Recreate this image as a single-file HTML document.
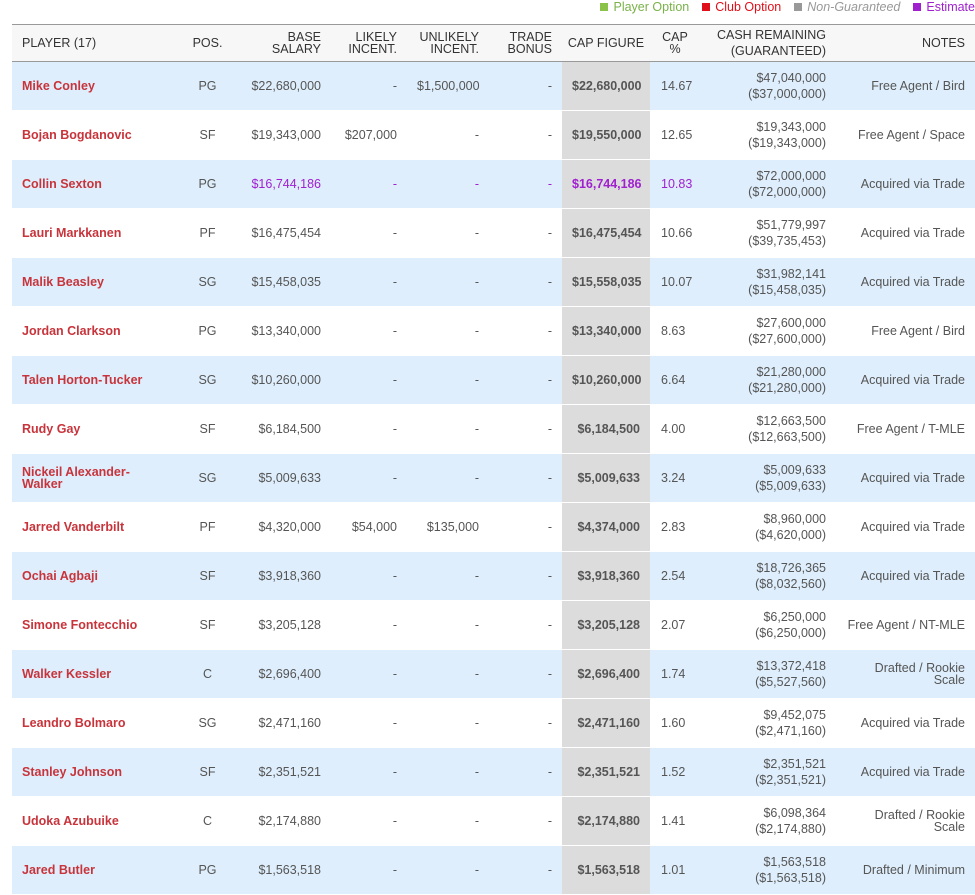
<!DOCTYPE html>
<html><head><style>
body{margin:0;background:#fff;font-family:"Liberation Sans",Arial,sans-serif;font-size:12.5px;color:#555;width:975px;height:895px;overflow:hidden;position:relative}
.legend{position:absolute;top:0;right:0;font-size:12.5px;line-height:14px;white-space:nowrap}
.legend span{margin-left:13px}
.legend i{display:inline-block;width:8px;height:8px;margin-right:5px;vertical-align:0}
table{position:absolute;left:12px;top:24px;border-collapse:collapse;table-layout:fixed;width:963px}
th{background:#f7f7f7;font-weight:normal;color:#333;height:36px;border-top:1px solid #999;border-bottom:1px solid #999;line-height:12px;text-align:right;padding:0 10px;font-size:12.5px}
td{height:48px;border-top:1px solid #fff;padding:0 10px;text-align:right;line-height:12px}
td.cash{line-height:16px}
tbody tr:nth-child(odd) td{background:#deeefc}
td.n{text-align:left;color:#c8343b;font-weight:bold}
td.p{text-align:center;padding:0}
td.c,tbody tr:nth-child(odd) td.c{background:#dcdcdc;font-weight:bold}
td.pc{text-align:left;padding-left:11px}
tr.e td{color:#a020d0}
tr.e td.n{color:#c8343b}
</style></head><body>
<div class="legend"><span style="color:#7ab24a"><i style="background:#8bc34a"></i>Player Option</span><span style="color:#e0101a"><i style="background:#e0101a"></i>Club Option</span><span style="color:#999;font-style:italic"><i style="background:#999"></i>Non-Guaranteed</span><span style="color:#a020d0"><i style="background:#a020d0"></i>Estimate</span></div>
<table>
<colgroup><col style="width:173px"><col style="width:45px"><col style="width:101px"><col style="width:76px"><col style="width:82px"><col style="width:73px"><col style="width:88px"><col style="width:50px"><col style="width:136px"><col style="width:139px"></colgroup>
<thead><tr><th style="text-align:left">PLAYER (17)</th><th style="text-align:center;padding:0">POS.</th><th>BASE<br>SALARY</th><th>LIKELY<br>INCENT.</th><th>UNLIKELY<br>INCENT.</th><th>TRADE<br>BONUS</th><th style="text-align:center;padding:0">CAP FIGURE</th><th style="text-align:center;padding:0">CAP<br>%</th><th style="line-height:16px">CASH REMAINING<br>(GUARANTEED)</th><th>NOTES</th></tr></thead>
<tbody>
<tr><td class="n">Mike Conley</td><td class="p">PG</td><td>$22,680,000</td><td>-</td><td>$1,500,000</td><td>-</td><td class="c">$22,680,000</td><td class="pc">14.67</td><td class="cash">$47,040,000<br>($37,000,000)</td><td>Free Agent / Bird</td></tr>
<tr><td class="n">Bojan Bogdanovic</td><td class="p">SF</td><td>$19,343,000</td><td>$207,000</td><td>-</td><td>-</td><td class="c">$19,550,000</td><td class="pc">12.65</td><td class="cash">$19,343,000<br>($19,343,000)</td><td>Free Agent / Space</td></tr>
<tr class="e"><td class="n">Collin Sexton</td><td class="p" style="color:#555">PG</td><td>$16,744,186</td><td>-</td><td>-</td><td>-</td><td class="c">$16,744,186</td><td class="pc">10.83</td><td class="cash" style="color:#555">$72,000,000<br>($72,000,000)</td><td style="color:#555">Acquired via Trade</td></tr>
<tr><td class="n">Lauri Markkanen</td><td class="p">PF</td><td>$16,475,454</td><td>-</td><td>-</td><td>-</td><td class="c">$16,475,454</td><td class="pc">10.66</td><td class="cash">$51,779,997<br>($39,735,453)</td><td>Acquired via Trade</td></tr>
<tr><td class="n">Malik Beasley</td><td class="p">SG</td><td>$15,458,035</td><td>-</td><td>-</td><td>-</td><td class="c">$15,558,035</td><td class="pc">10.07</td><td class="cash">$31,982,141<br>($15,458,035)</td><td>Acquired via Trade</td></tr>
<tr><td class="n">Jordan Clarkson</td><td class="p">PG</td><td>$13,340,000</td><td>-</td><td>-</td><td>-</td><td class="c">$13,340,000</td><td class="pc">8.63</td><td class="cash">$27,600,000<br>($27,600,000)</td><td>Free Agent / Bird</td></tr>
<tr><td class="n">Talen Horton-Tucker</td><td class="p">SG</td><td>$10,260,000</td><td>-</td><td>-</td><td>-</td><td class="c">$10,260,000</td><td class="pc">6.64</td><td class="cash">$21,280,000<br>($21,280,000)</td><td>Acquired via Trade</td></tr>
<tr><td class="n">Rudy Gay</td><td class="p">SF</td><td>$6,184,500</td><td>-</td><td>-</td><td>-</td><td class="c">$6,184,500</td><td class="pc">4.00</td><td class="cash">$12,663,500<br>($12,663,500)</td><td>Free Agent / T-MLE</td></tr>
<tr><td class="n">Nickeil Alexander-<br>Walker</td><td class="p">SG</td><td>$5,009,633</td><td>-</td><td>-</td><td>-</td><td class="c">$5,009,633</td><td class="pc">3.24</td><td class="cash">$5,009,633<br>($5,009,633)</td><td>Acquired via Trade</td></tr>
<tr><td class="n">Jarred Vanderbilt</td><td class="p">PF</td><td>$4,320,000</td><td>$54,000</td><td>$135,000</td><td>-</td><td class="c">$4,374,000</td><td class="pc">2.83</td><td class="cash">$8,960,000<br>($4,620,000)</td><td>Acquired via Trade</td></tr>
<tr><td class="n">Ochai Agbaji</td><td class="p">SF</td><td>$3,918,360</td><td>-</td><td>-</td><td>-</td><td class="c">$3,918,360</td><td class="pc">2.54</td><td class="cash">$18,726,365<br>($8,032,560)</td><td>Acquired via Trade</td></tr>
<tr><td class="n">Simone Fontecchio</td><td class="p">SF</td><td>$3,205,128</td><td>-</td><td>-</td><td>-</td><td class="c">$3,205,128</td><td class="pc">2.07</td><td class="cash">$6,250,000<br>($6,250,000)</td><td>Free Agent / NT-MLE</td></tr>
<tr><td class="n">Walker Kessler</td><td class="p">C</td><td>$2,696,400</td><td>-</td><td>-</td><td>-</td><td class="c">$2,696,400</td><td class="pc">1.74</td><td class="cash">$13,372,418<br>($5,527,560)</td><td>Drafted / Rookie<br>Scale</td></tr>
<tr><td class="n">Leandro Bolmaro</td><td class="p">SG</td><td>$2,471,160</td><td>-</td><td>-</td><td>-</td><td class="c">$2,471,160</td><td class="pc">1.60</td><td class="cash">$9,452,075<br>($2,471,160)</td><td>Acquired via Trade</td></tr>
<tr><td class="n">Stanley Johnson</td><td class="p">SF</td><td>$2,351,521</td><td>-</td><td>-</td><td>-</td><td class="c">$2,351,521</td><td class="pc">1.52</td><td class="cash">$2,351,521<br>($2,351,521)</td><td>Acquired via Trade</td></tr>
<tr><td class="n">Udoka Azubuike</td><td class="p">C</td><td>$2,174,880</td><td>-</td><td>-</td><td>-</td><td class="c">$2,174,880</td><td class="pc">1.41</td><td class="cash">$6,098,364<br>($2,174,880)</td><td>Drafted / Rookie<br>Scale</td></tr>
<tr><td class="n">Jared Butler</td><td class="p">PG</td><td>$1,563,518</td><td>-</td><td>-</td><td>-</td><td class="c">$1,563,518</td><td class="pc">1.01</td><td class="cash">$1,563,518<br>($1,563,518)</td><td>Drafted / Minimum</td></tr>
</tbody></table>
</body></html>
